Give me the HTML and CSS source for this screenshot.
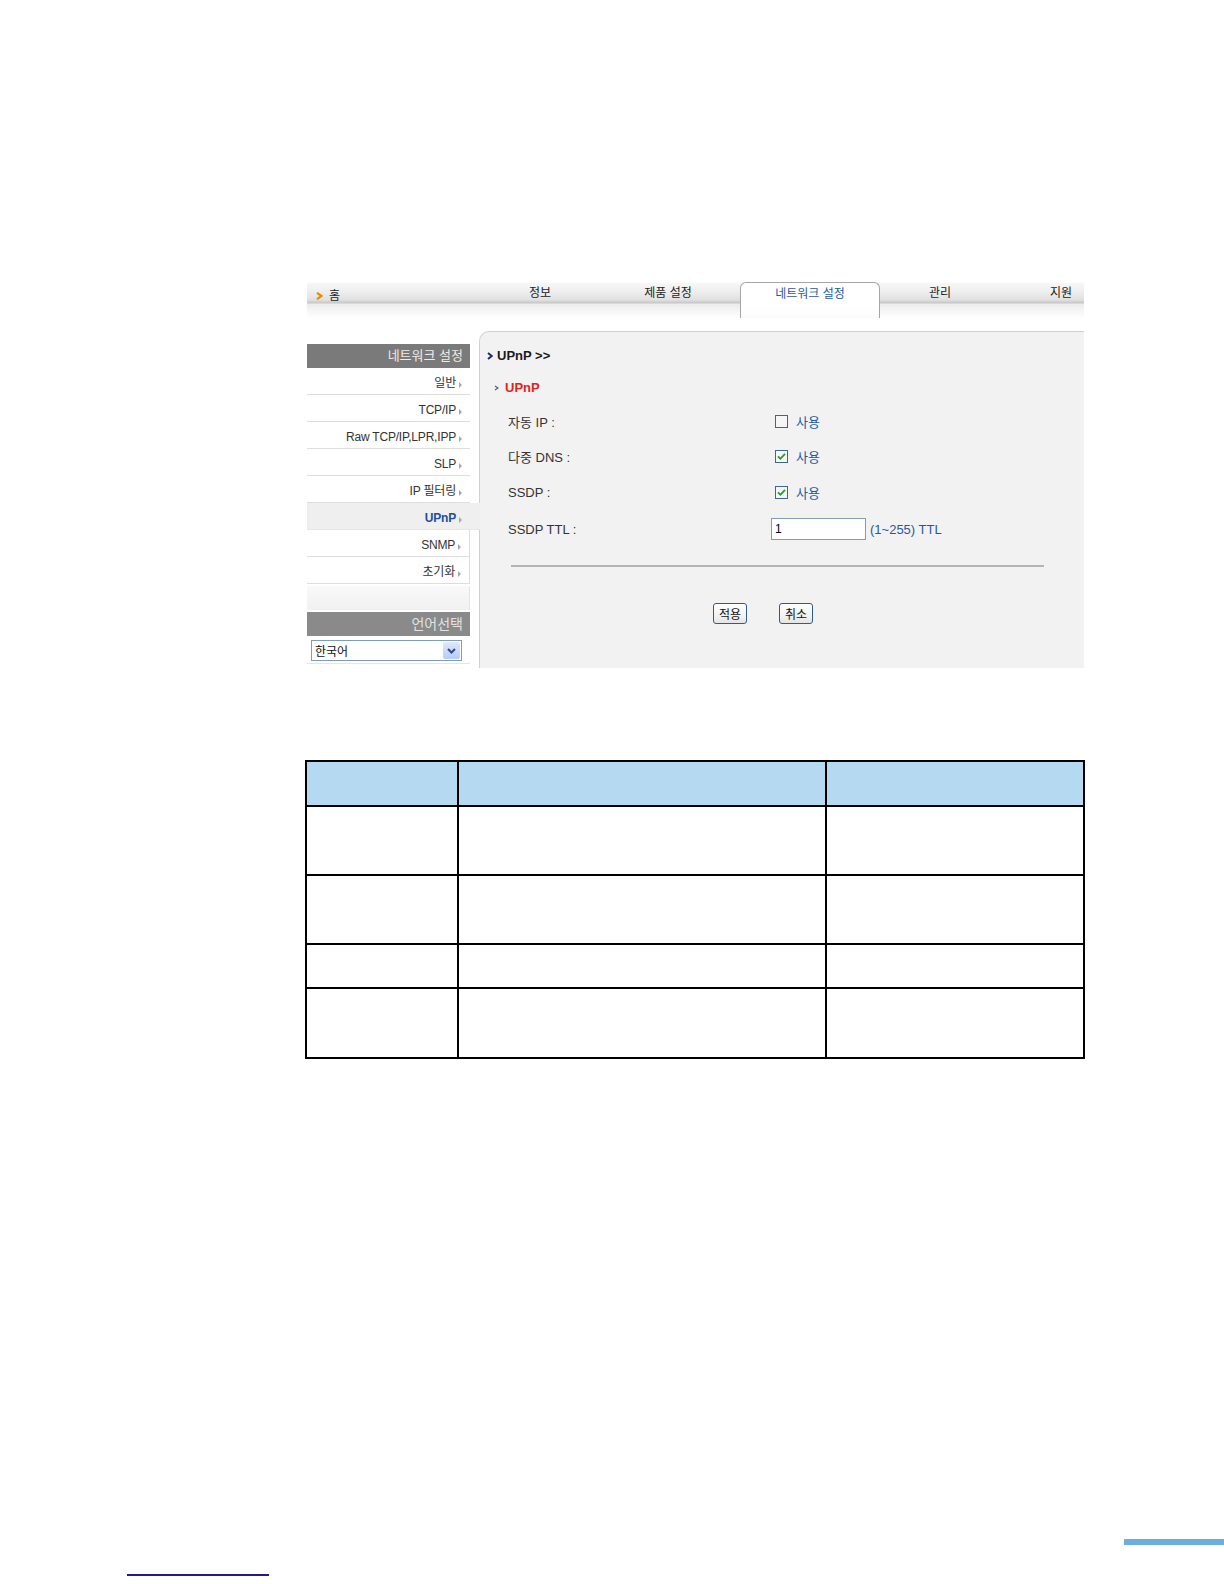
FILE: index.html
```html
<!DOCTYPE html>
<html lang="ko">
<head>
<meta charset="utf-8">
<title>UPnP</title>
<link rel="stylesheet" href="styles.css">
</head>
<body>
<div class="screen">
  <div class="tabbar">
    <div class="tab tab-home"><svg class="home-arrow" width="7" height="8" viewBox="0 0 7 8"><path d="M1 0.8 L5.6 4 L1 7.2" fill="none" stroke="#f08a00" stroke-width="2.2"/></svg><span>홈</span></div>
    <div class="tab tab-info">정보</div>
    <div class="tab tab-product">제품 설정</div>
    <div class="tab tab-active">네트워크 설정</div>
    <div class="tab tab-manage">관리</div>
    <div class="tab tab-support">지원</div>
  </div>
  <div class="main">
    <aside class="sidebar">
      <div class="side-head">네트워크 설정</div>
      <ul class="side-menu">
        <li>일반<i class="tri"></i></li>
        <li>TCP/IP<i class="tri"></i></li>
        <li>Raw TCP/IP,LPR,IPP<i class="tri"></i></li>
        <li>SLP<i class="tri"></i></li>
        <li>IP 필터링<i class="tri"></i></li>
        <li class="selected">UPnP<i class="tri"></i></li>
        <li class="after">SNMP<i class="tri"></i></li>
        <li class="after">초기화<i class="tri"></i></li>
      </ul>
      <div class="side-spacer"></div>
      <div class="side-head lang-head">언어선택</div>
      <div class="lang-select"><span>한국어</span><span class="dd"><svg width="9" height="6" viewBox="0 0 9 6"><path d="M1 1 L4.5 4.5 L8 1" fill="none" stroke="#2b4c8c" stroke-width="2"/></svg></span></div>
      <div class="side-bottom"></div>
    </aside>
    <section class="panel">
      <h1 class="panel-title"><svg width="6" height="8" viewBox="0 0 6 8"><path d="M1 1 L4.8 4 L1 7" fill="none" stroke="#1b2a6b" stroke-width="2"/></svg><span>UPnP &gt;&gt;</span></h1>
      <h2 class="panel-sub"><svg width="5" height="6" viewBox="0 0 5 6"><path d="M1 1 L4 3 L1 5" fill="none" stroke="#5a5a7a" stroke-width="1.3"/></svg><span>UPnP</span></h2>
      <div class="form">
        <div class="label">자동 IP :</div>
        <div class="value"><svg class="chk" width="13" height="13" viewBox="0 0 13 13"><rect x="0.5" y="0.5" width="12" height="12" fill="#f6f6f6" stroke="#3a6890"/></svg><span>사용</span></div>
        <div class="label">다중 DNS :</div>
        <div class="value"><svg class="chk" width="13" height="13" viewBox="0 0 13 13"><rect x="0.5" y="0.5" width="12" height="12" fill="#f6f6f6" stroke="#3a6890"/><path d="M3 6.3 L5.4 8.8 L10 3.8" fill="none" stroke="#21a121" stroke-width="1.8"/></svg><span>사용</span></div>
        <div class="label">SSDP :</div>
        <div class="value"><svg class="chk" width="13" height="13" viewBox="0 0 13 13"><rect x="0.5" y="0.5" width="12" height="12" fill="#f6f6f6" stroke="#3a6890"/><path d="M3 6.3 L5.4 8.8 L10 3.8" fill="none" stroke="#21a121" stroke-width="1.8"/></svg><span>사용</span></div>
        <div class="label">SSDP TTL :</div>
        <div class="value value-ttl"><input class="ttl" type="text" value="1"><span>(1~255) TTL</span></div>
      </div>
      <hr class="sep">
      <div class="buttons"><button type="button">적용</button><button type="button">취소</button></div>
    </section>
  </div>
</div>
<table class="doc-table">
  <colgroup><col class="c1"><col class="c2"><col class="c3"></colgroup>
  <thead><tr class="r-head"><th></th><th></th><th></th></tr></thead>
  <tbody>
    <tr class="r-tall"><td></td><td></td><td></td></tr>
    <tr class="r-tall"><td></td><td></td><td></td></tr>
    <tr class="r-short"><td></td><td></td><td></td></tr>
    <tr class="r-last"><td></td><td></td><td></td></tr>
  </tbody>
</table>
<div class="foot-bar"></div>
<div class="foot-line"></div>
</body>
</html>
```
FILE: styles.css
```css
html, body {
  margin: 0;
  padding: 0;
  background: #fff;
}
body {
  font-family: "Liberation Sans", "Noto Sans CJK KR", sans-serif;
  font-size: 12px;
  color: #333;
}

.screen {
  margin: 282px 0 0 307px;
  width: 777px;
}

/* ---------- tab bar ---------- */
.tabbar {
  display: flex;
  height: 36px;
  background: linear-gradient(to bottom,
    #ffffff 0px, #f7f7f7 1px, #eeeeee 10px, #e0e0e0 18px,
    #cfcfcf 20px, #c6c6c6 21px, #ececec 22px, #f3f3f3 27px, #ffffff 36px);
}
.tab {
  box-sizing: border-box;
  height: 36px;
  line-height: 20px;
  padding-top: 1px;
  text-align: center;
  color: #222;
  font-size: 12px;
}
.tab-home {
  width: 183px;
  display: flex;
  align-items: center;
  align-self: flex-start;
  height: auto;
  gap: 6px;
  padding: 4px 0 0 9px;
}
.home-arrow { flex: none; }
.tab-info { width: 100px; }
.tab-product { width: 150px; padding-left: 6px; }
.tab-active {
  width: 140px;
  border: 1px solid #a5a5a5;
  border-bottom: 0;
  border-radius: 6px 6px 0 0;
  background: linear-gradient(to bottom, #ffffff, #ffffff 70%, #fbfbfb);
  color: #1f5aa0;
  padding-top: 1px;
}
.tab-manage { width: 120px; }
.tab-support { width: 84px; text-align: right; padding-right: 12px; }

/* ---------- main ---------- */
.main {
  display: flex;
  align-items: flex-start;
  margin-top: 13px;
}

.sidebar {
  flex: none;
  width: 163px;
  padding-top: 13px;
}
.side-head {
  height: 24px;
  line-height: 24px;
  background: #7a7a7a;
  color: #ececec;
  text-align: right;
  padding-right: 7px;
  font-size: 13px;
}
.side-menu {
  list-style: none;
  margin: 0;
  padding: 0;
}
.side-menu li {
  box-sizing: border-box;
  height: 27px;
  padding: 5px 8px 0 0;
  line-height: 21px;
  border-bottom: 1px solid #dedede;
  display: flex;
  justify-content: flex-end;
  align-items: center;
  color: #333;
  letter-spacing: -0.2px;
}
.tri {
  display: inline-block;
  width: 0;
  height: 0;
  border-left: 3px solid #a8a8a8;
  border-top: 3px solid transparent;
  border-bottom: 3px solid transparent;
  margin-left: 3px;
  margin-top: 2px;
}
.side-menu li.selected {
  position: relative;
  z-index: 1;
  margin-right: -10px;
  padding-right: 18px;
  background: #efefef;
  border-bottom-color: #e6e6e6;
  color: #1d4f9c;
  font-weight: bold;
}
.side-menu li.after {
  border-right: 1px solid #dddddd;
}
.side-spacer {
  height: 24px;
  margin-top: 2px;
  background: linear-gradient(to bottom, #f9f9f9, #f1f1f1);
  border-right: 1px solid #e4e4e4;
}
.lang-head {
  height: 24px;
  line-height: 24px;
  margin-top: 2px;
  background: #8a8a8a;
  color: #e2e2e2;
  font-size: 14px;
}
.lang-select {
  box-sizing: border-box;
  display: flex;
  align-items: center;
  justify-content: space-between;
  height: 21px;
  margin: 4px 8px 0 4px;
  padding-left: 3px;
  border: 1px solid #7f9db9;
  background: #fff;
  color: #111;
  font-size: 12px;
}
.dd {
  display: flex;
  align-items: center;
  justify-content: center;
  width: 17px;
  height: 17px;
  margin-right: 1px;
  border-radius: 2px;
  background: linear-gradient(to bottom, #dfe9fd, #b6cbf7);
}
.side-bottom {
  margin-top: 2px;
  border-top: 1px solid #e6e6e6;
}

/* ---------- panel ---------- */
.panel {
  flex: none;
  box-sizing: border-box;
  width: 605px;
  height: 337px;
  margin-left: 9px;
  border-top: 1px solid #d2d2d2;
  border-left: 1px solid #d2d2d2;
  border-top-left-radius: 10px;
  background: #f2f2f2;
}
.panel-title {
  display: flex;
  align-items: center;
  gap: 4px;
  margin: 0;
  padding: 15px 0 0 7px;
  line-height: 18px;
  font-size: 13px;
  font-weight: bold;
  color: #1a1a1a;
}
.panel-sub {
  display: flex;
  align-items: center;
  gap: 6px;
  margin: 14px 0 0 14px;
  line-height: 18px;
  font-size: 13px;
  font-weight: bold;
  color: #e3211b;
}
.form {
  display: grid;
  grid-template-columns: 263px auto;
  grid-template-rows: 36px 35px 36px 38px;
  align-items: center;
  margin: 6px 0 0 28px;
  font-size: 13px;
}
.label { color: #333; }
.value {
  display: flex;
  align-items: center;
  gap: 8px;
  color: #1f5aa0;
}
.chk { margin-left: 4px; flex: none; }
.value-ttl { gap: 4px; }
.ttl {
  box-sizing: border-box;
  width: 95px;
  height: 22px;
  margin: 0;
  padding: 0 3px;
  border: 1px solid #7f9db9;
  background: #fff;
  font-family: "Liberation Sans", sans-serif;
  font-size: 12px;
  color: #000;
}
.sep {
  display: block;
  width: 533px;
  height: 2px;
  margin: 17px 0 0 31px;
  border: 0;
  background: #b4b4b4;
}
.buttons {
  display: flex;
  gap: 32px;
  margin: 36px 0 0 233px;
}
.buttons button {
  box-sizing: border-box;
  width: 34px;
  height: 21px;
  padding: 0;
  border: 1px solid #2d5d8c;
  border-radius: 3px;
  background: linear-gradient(to bottom, #ffffff, #f3f3f3 60%, #e4e4e4);
  font-family: "Noto Sans CJK KR", sans-serif;
  font-size: 12px;
  line-height: 17px;
  color: #111;
}

/* ---------- doc table ---------- */
.doc-table {
  border-collapse: collapse;
  table-layout: fixed;
  width: 778px;
  margin: 92px 0 0 305px;
}
.doc-table th,
.doc-table td {
  border: 2px solid #000;
  padding: 0;
}
.c1 { width: 152px; }
.c2 { width: 368px; }
.c3 { width: 258px; }
.r-head th { background: #b4d9f1; height: 43px; }
.r-tall td { height: 67px; }
.r-short td { height: 42px; }
.r-last td { height: 68px; }

/* ---------- footer decorations ---------- */
.foot-bar {
  width: 100px;
  height: 6px;
  margin: 480px 0 0 1124px;
  background: #6caee0;
}
.foot-line {
  width: 142px;
  height: 2px;
  margin: 29px 0 0 127px;
  background: #1c1c8a;
}
```
